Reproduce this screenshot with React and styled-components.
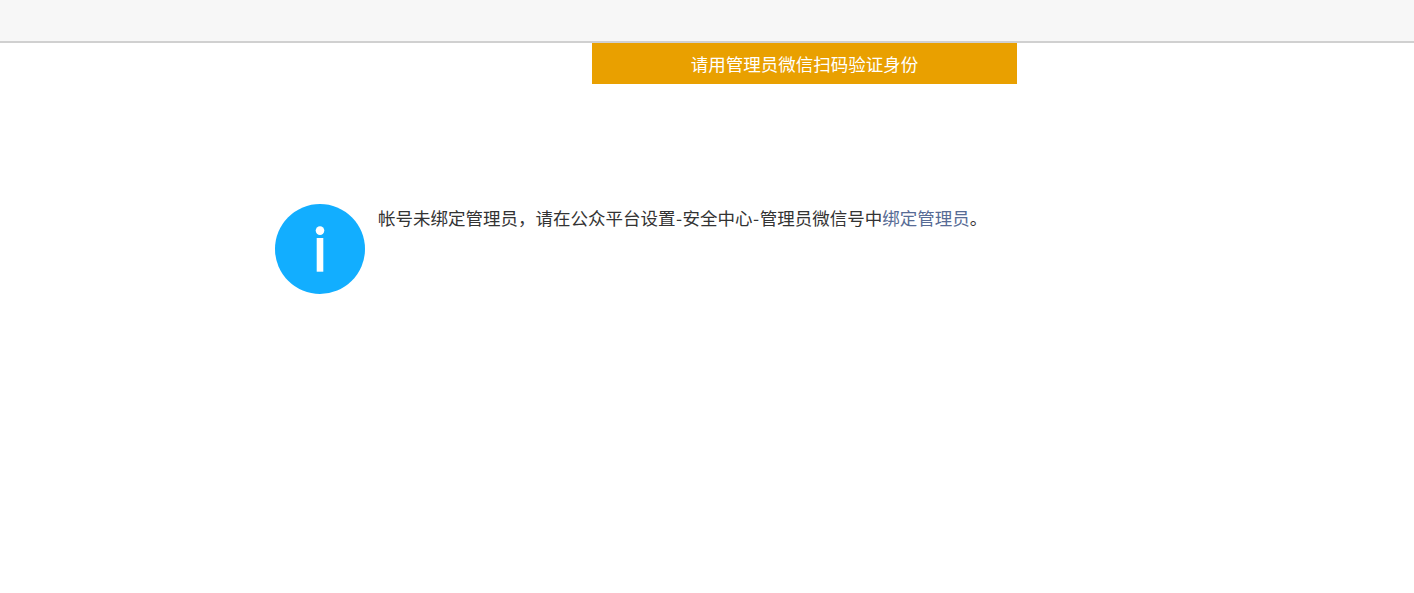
import React from 'react';
import styled, { createGlobalStyle } from 'styled-components';

const Global = createGlobalStyle`
  html, body { margin: 0; padding: 0; background: #fff; }
  body { font-family: "Noto Sans CJK SC", "Liberation Sans", sans-serif; overflow: hidden; }
`;
const Page = styled.div`
  width: 1414px;
  height: 593px;
  display: flex;
  flex-direction: column;
`;
const TopBar = styled.header`
  height: 41px;
  background: #f7f7f7;
  border-bottom: 2px solid #d0d0d0;
  flex: none;
`;
const Banner = styled.div`
  width: 425px;
  height: 41px;
  margin-left: 592px;
  background: #e9a000;
  color: #fff;
  font-size: 17.5px;
  line-height: 41px;
  text-align: center;
  flex: none;
`;
const Notice = styled.div`
  display: flex;
  align-items: flex-start;
  margin: 120px 0 0 275px;
  gap: 13px;
`;
const InfoIcon = styled.div`
  width: 90px;
  height: 90px;
  border-radius: 50%;
  background: #12aeff;
  flex: none;
  display: flex;
  align-items: center;
  justify-content: center;
`;
const Message = styled.p`
  margin: 3px 0 0;
  font-size: 17.5px;
  line-height: 22px;
  color: #333;
  white-space: nowrap;
`;
const Hyphen = styled.span`
  padding: 0 0.5px;
`;
const BindLink = styled.a`
  color: #576b95;
  text-decoration: none;
`;

export default function App() {
  return (
    <Page>
      <Global />
      <TopBar />
      <Banner>请用管理员微信扫码验证身份</Banner>
      <Notice>
        <InfoIcon>
          <svg width="10" height="46" viewBox="0 0 10 46">
            <circle cx="5" cy="4.6" r="4.3" fill="#fff" />
            <rect x="1.7" y="12" width="6.6" height="33.7" fill="#fff" />
          </svg>
        </InfoIcon>
        <Message>帐号未绑定管理员，请在公众平台设置<Hyphen>-</Hyphen>安全中心<Hyphen>-</Hyphen>管理员微信号中<BindLink href="#">绑定管理员</BindLink>。</Message>
      </Notice>
    </Page>
  );
}
